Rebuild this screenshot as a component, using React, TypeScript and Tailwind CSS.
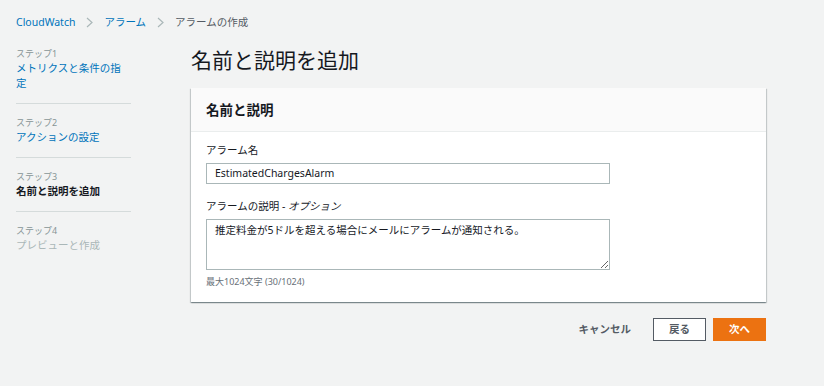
import React from "react";

const font = { fontFamily: '"Noto Sans", "Noto Sans CJK JP", sans-serif' };

function Chevron() {
  return (
    <svg width="7" height="11" viewBox="0 0 7 11" className="mx-[11px]">
      <path d="M1 1l5 4.5L1 10" fill="none" stroke="#aab7b8" strokeWidth="1.2" />
    </svg>
  );
}

type Step = { label: string; title: string; state: "link" | "current" | "disabled" };

const steps: Step[] = [
  { label: "ステップ1", title: "メトリクスと条件の指定", state: "link" },
  { label: "ステップ2", title: "アクションの設定", state: "link" },
  { label: "ステップ3", title: "名前と説明を追加", state: "current" },
  { label: "ステップ4", title: "プレビューと作成", state: "disabled" },
];

export default function App() {
  return (
    <div className="w-[824px] h-[386px] bg-[#f2f3f3] text-[#16191f] overflow-hidden" style={font}>
      <div className="pl-[16px] pr-[58px]">
        <div className="pt-[15px] flex items-center text-[10.5px] leading-[14px]">
          <span className="text-[#0073bb]">CloudWatch</span>
          <Chevron />
          <span className="text-[#0073bb]">アラーム</span>
          <Chevron />
          <span className="text-[#545b64]">アラームの作成</span>
        </div>
        <div className="flex mt-[6px]">
          <nav className="w-[115px] shrink-0">
            {steps.map((s, i) => (
              <div
                key={s.label}
                className={`py-[12px] ${i < steps.length - 1 ? "border-b border-[#d5dbdb]" : ""}`}
              >
                <div className="text-[9px] leading-[13px] text-[#879596]">{s.label}</div>
                <div
                  className={`mt-[1px] text-[10.5px] leading-[15px] ${
                    s.state === "link"
                      ? "text-[#0073bb]"
                      : s.state === "current"
                      ? "font-bold text-[#16191f]"
                      : "text-[#aab7b8]"
                  }`}
                >
                  {s.title}
                </div>
              </div>
            ))}
          </nav>
          <main className="ml-[60px] flex-1">
            <h1 className="pt-[11px] text-[21px] leading-[28px] font-normal text-[#16191f]">名前と説明を追加</h1>
            <div className="mt-[14px] bg-white shadow-[0_1px_1px_0_rgba(0,28,36,0.3),1px_1px_1px_0_rgba(0,28,36,0.15),-1px_1px_1px_0_rgba(0,28,36,0.15)]">
              <div className="h-[44px] bg-[#fafafa] border-b border-[#eaeded] px-[15px] flex items-center">
                <h2 className="text-[13.5px] font-bold leading-[18px]">名前と説明</h2>
              </div>
              <div className="px-[15px] pt-[11px] pb-[14px]">
                <div className="text-[10.5px] leading-[14px] text-[#16191f]">アラーム名</div>
                <div className="mt-[6px] w-[404px] h-[21px] border border-[#aab7b8] flex items-center px-[8px] text-[10.5px]">
                  EstimatedChargesAlarm
                </div>
                <div className="mt-[15px] text-[10.5px] leading-[14px] text-[#16191f]">
                  アラームの説明 - <i>オプション</i>
                </div>
                <textarea
                  readOnly
                  defaultValue="推定料金が5ドルを超える場合にメールにアラームが通知される。"
                  className="block mt-[6px] w-[404px] h-[51px] border border-[#aab7b8] px-[8px] pt-[3px] text-[10.5px] leading-[15px] text-[#16191f] outline-none"
                  style={font}
                />
                <div className="mt-[6px] text-[9px] leading-[12px] text-[#687078]">最大1024文字 (30/1024)</div>
              </div>
            </div>
            <div className="mt-[16px] flex justify-end items-center gap-[7px]">
              <button className="h-[23px] px-[15px] text-[10.5px] font-bold text-[#545b64]">キャンセル</button>
              <button className="h-[23px] w-[53px] border border-[#545b64] bg-white text-[10.5px] font-bold text-[#545b64] flex items-center justify-center">
                戻る
              </button>
              <button className="h-[23px] w-[53px] bg-[#ec7211] border border-[#ec7211] text-[10.5px] font-bold text-white flex items-center justify-center">
                次へ
              </button>
            </div>
          </main>
        </div>
      </div>
    </div>
  );
}
